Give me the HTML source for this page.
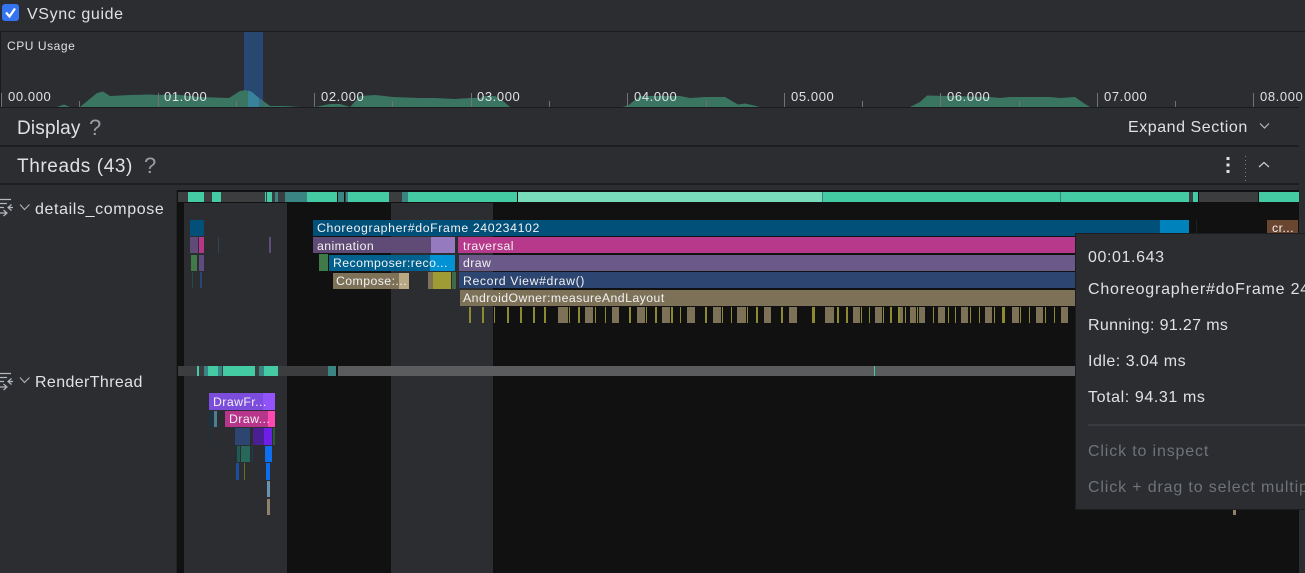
<!DOCTYPE html>
<html>
<head>
<meta charset="utf-8">
<style>
html,body{margin:0;padding:0;background:#2b2d30;}
body{width:1305px;height:573px;overflow:hidden;position:relative;font-family:"Liberation Sans",sans-serif;color:#dfe1e5;}
div{position:absolute;}
.t{white-space:nowrap;}
.b{position:absolute;white-space:nowrap;overflow:hidden;color:#f2f2f2;font-size:12.3px;letter-spacing:.42px;line-height:16px;box-sizing:border-box;padding-left:4px;height:16px;}
.tl{font-size:13px;letter-spacing:.6px;top:90px;line-height:14px;color:#dfe1e5;}
.tip{left:12px;font-size:16px;line-height:18px;white-space:nowrap;color:#dfe1e5;}
</style>
</head>
<body>
<!-- header -->
<div style="left:2px;top:4px;width:17px;height:17px;background:#3574f0;border-radius:3px;"></div>
<svg style="position:absolute;left:2px;top:4px" width="17" height="17"><path d="M4 8.500L7.500 12.500L13 4.500" stroke="#fff" stroke-width="2.200" fill="none"/></svg>
<div class="t" style="left:27px;top:6px;font-size:16px;line-height:18px;letter-spacing:.62px;">VSync guide</div>

<!-- chart -->
<div style="left:0;top:31px;width:1305px;height:1px;background:#1b1c1e;"></div>
<div style="left:0;top:31px;width:1px;height:76px;background:#1b1c1e;"></div>
<div class="t" style="left:7px;top:39px;font-size:12px;line-height:15px;letter-spacing:.55px;">CPU Usage</div>
<svg style="position:absolute;left:0;top:0" width="1305" height="110">
<rect x="244" y="32" width="19" height="75" fill="#2a4677"/>
<rect x="248" y="32" width="11" height="75" fill="#27496e"/>
<path fill="#3a7561" d="M57 107L64 104.500L70 107ZM80 107L97 93L103 91.500L110 96L130 95L150 94.500L158 95L175 94.500L200 97L229 98L240 91L246 90L262 100L270 106L285 106L300 107L315 107L330 104L340 104L347 106L350 107L360 96L375 95L393 97L420 98L435 98L455 99L470 98L480 98L485 96L495 96L503 101L510 107ZM622 107L628 105.500L640 96L680 96L690 98L705 97L725 97L738 104.500L745 103.500L752 105L760 107ZM910 107L920 102L927 95.500L950 96L990 97L1000 98L1010 97L1050 97L1060 98L1075 97L1085 104L1090 107Z"/>
<path fill="#38839b" d="M248 90.500L252 92L259 98L259 107L248 107Z"/>
<path fill="#37717f" d="M259 98L263 101L263 107L259 107Z"/>
<g fill="#6f7276">
<rect x="1" y="93" width="1" height="14"/><rect x="158" y="93" width="1" height="14"/><rect x="314" y="93" width="1" height="14"/><rect x="471" y="93" width="1" height="14"/><rect x="627" y="93" width="1" height="14"/><rect x="784" y="93" width="1" height="14"/><rect x="940" y="93" width="1" height="14"/><rect x="1097" y="93" width="1" height="14"/><rect x="1253" y="93" width="1" height="14"/>
<rect x="79" y="101" width="1" height="6"/><rect x="236" y="101" width="1" height="6"/><rect x="392" y="101" width="1" height="6"/><rect x="549" y="101" width="1" height="6"/><rect x="706" y="101" width="1" height="6"/><rect x="862" y="101" width="1" height="6"/><rect x="1019" y="101" width="1" height="6"/><rect x="1175" y="101" width="1" height="6"/>
</g>
</svg>
<div class="t tl" style="left:8px;">00.000</div>
<div class="t tl" style="left:164px;">01.000</div>
<div class="t tl" style="left:321px;">02.000</div>
<div class="t tl" style="left:477px;">03.000</div>
<div class="t tl" style="left:634px;">04.000</div>
<div class="t tl" style="left:791px;">05.000</div>
<div class="t tl" style="left:947px;">06.000</div>
<div class="t tl" style="left:1104px;">07.000</div>
<div class="t tl" style="left:1260px;">08.000</div>
<div style="left:0;top:107px;width:1299px;height:1px;background:#1b1c1e;"></div>

<!-- sections -->
<div class="t" style="left:17px;top:118px;font-size:19px;line-height:21px;letter-spacing:.17px;">Display</div>
<div class="t" style="left:89px;top:115px;font-size:22px;line-height:25px;color:#9a9da3;">?</div>
<div class="t" style="left:1128px;top:118px;font-size:16px;line-height:19px;letter-spacing:.55px;">Expand Section</div>
<svg style="position:absolute;left:1258px;top:120px" width="14" height="12"><path d="M2 3.500L6.500 8L11 3.500" stroke="#b4b8bf" stroke-width="1.200" fill="none"/></svg>
<div style="left:0;top:145px;width:1299px;height:2px;background:#1d1e20;"></div>
<div class="t" style="left:17px;top:156px;font-size:19px;line-height:21px;letter-spacing:.6px;">Threads (43)</div>
<div class="t" style="left:144px;top:153px;font-size:22px;line-height:25px;color:#9a9da3;">?</div>
<svg style="position:absolute;left:1220px;top:154px" width="60" height="28">
<rect x="6.500" y="3" width="3" height="3" fill="#dfe1e5"/><rect x="6.500" y="9.500" width="3" height="3" fill="#dfe1e5"/><rect x="6.500" y="16" width="3" height="3" fill="#dfe1e5"/>
<g fill="#777a7f"><rect x="25" y="2" width="1" height="1"/><rect x="25" y="6" width="1" height="1"/><rect x="25" y="10" width="1" height="1"/><rect x="25" y="14" width="1" height="1"/><rect x="25" y="18" width="1" height="1"/><rect x="25" y="22" width="1" height="1"/><rect x="25" y="26" width="1" height="1"/></g>
<path d="M39 13L44 8.500L49 13" stroke="#c4c7cc" stroke-width="1.300" fill="none"/>
</svg>
<div style="left:0;top:183px;width:1299px;height:2px;background:#1d1e20;"></div>

<!-- track labels -->
<svg style="position:absolute;left:0;top:198px" width="32" height="20" fill="none" stroke="#b4b8bf" stroke-width="1.200">
<path d="M0 1.500H11M0 5.500H7M0 9.500H4M11.500 6.500L8 9.500L11.500 12.500M8 9.500H13M0 15H6M3.500 12L7 15L3.500 18"/>
</svg>
<svg style="position:absolute;left:19px;top:203px" width="12" height="10"><path d="M1 1.500L5.500 6.500L10.500 1.500" stroke="#a8abb1" stroke-width="1.200" fill="none"/></svg>
<div class="t" style="left:35px;top:200px;font-size:16px;line-height:19px;letter-spacing:.62px;">details_compose</div>
<svg style="position:absolute;left:0;top:372px" width="32" height="20" fill="none" stroke="#b4b8bf" stroke-width="1.200">
<path d="M0 1.500H11M0 5.500H7M0 9.500H4M11.500 6.500L8 9.500L11.500 12.500M8 9.500H13M0 15H6M3.500 12L7 15L3.500 18"/>
</svg>
<svg style="position:absolute;left:19px;top:376px" width="12" height="10"><path d="M1 1.500L5.500 6.500L10.500 1.500" stroke="#a8abb1" stroke-width="1.200" fill="none"/></svg>
<div class="t" style="left:35px;top:373px;font-size:16px;line-height:19px;letter-spacing:.38px;">RenderThread</div>

<!-- timeline background -->
<div style="left:176px;top:190px;width:1px;height:383px;background:#232427;"></div>
<div style="left:177px;top:190px;width:1122px;height:383px;background:#111111;"></div>
<div style="left:184px;top:203px;width:103px;height:370px;background:#2b2d30;"></div>
<div style="left:391px;top:203px;width:102px;height:370px;background:#2b2d30;"></div>

<svg style="position:absolute;left:0;top:0" width="1305" height="573">
<!-- top thread strip -->
<rect x="178" y="192" width="1121" height="10" fill="#3c3d3f"/>
<g fill="#45cba4">
<rect x="188" y="192" width="16" height="10"/><rect x="212" y="192" width="9" height="10"/><rect x="265" y="192" width="1" height="10"/><rect x="267" y="192" width="5" height="10"/><rect x="276" y="192" width="1" height="10"/>
<rect x="307" y="192" width="30" height="10"/><rect x="348" y="192" width="41" height="10"/><rect x="408" y="192" width="109" height="10"/>
<rect x="823" y="192" width="237" height="10"/><rect x="1061" y="192" width="128" height="10"/><rect x="1193" y="192" width="5" height="10"/><rect x="1259" y="192" width="40" height="10"/>
</g>
<rect x="518" y="192" width="304" height="10" fill="#78dbbb"/>
<g fill="#3a8584"><rect x="275" y="192" width="3" height="10"/><rect x="285" y="192" width="22" height="10"/><rect x="338" y="192" width="6" height="10"/><rect x="346" y="192" width="2" height="10"/><rect x="402" y="192" width="6" height="10"/><rect x="822" y="192" width="1" height="10"/><rect x="1060" y="192" width="1" height="10"/></g>
<g fill="#111"><rect x="337" y="192" width="1" height="10"/><rect x="344" y="192" width="1" height="10"/><rect x="517" y="192" width="1" height="10"/><rect x="1198" y="192" width="1" height="10"/><rect x="1258" y="192" width="1" height="10"/></g>

<!-- render strip -->
<rect x="178" y="366" width="150" height="10" fill="#3c3d3f"/>
<rect x="338" y="366" width="737" height="10" fill="#5a5c5e"/>
<g fill="#45cba4"><rect x="197" y="366" width="2" height="10"/><rect x="208" y="366" width="10" height="10"/><rect x="223" y="366" width="32" height="10"/><rect x="264" y="366" width="14" height="10"/><rect x="874" y="366" width="1" height="10"/></g>
<g fill="#3a8584"><rect x="204" y="366" width="4" height="10"/><rect x="218" y="366" width="4" height="10"/><rect x="259" y="366" width="5" height="10"/><rect x="328" y="366" width="8" height="10"/></g>

<!-- small left frames -->
<rect x="190" y="220" width="14" height="16" fill="#00507a"/>
<rect x="190" y="237" width="8" height="16" fill="#5f4b75"/><rect x="199" y="237" width="5" height="16" fill="#b7368c"/>
<rect x="218" y="237" width="1" height="16" fill="#2f4656"/><rect x="269" y="237" width="2" height="16" fill="#5f4b80"/>
<rect x="191" y="255" width="6" height="16" fill="#3f7a48"/><rect x="199" y="255" width="5" height="16" fill="#5f4b80"/>
<rect x="192" y="272" width="1" height="16" fill="#264a44"/><rect x="200" y="272" width="2" height="16" fill="#284676"/>

<!-- render small frames -->
<rect x="209" y="411" width="4" height="16" fill="#1c3340"/><rect x="214" y="411" width="3" height="16" fill="#4f7d93"/>
<rect x="209" y="428" width="1" height="16" fill="#1f3340"/>
<rect x="235" y="428" width="15" height="17" fill="#2d4571"/><rect x="253" y="428" width="11" height="17" fill="#4a1f93"/><rect x="264" y="428" width="8" height="17" fill="#6d1fe8"/><rect x="273" y="428" width="2" height="17" fill="#2d5a3a"/>
<rect x="237" y="446" width="3" height="16" fill="#1f5a56"/><rect x="241" y="446" width="9" height="16" fill="#26685a"/><rect x="252" y="446" width="1" height="16" fill="#1f3a5a"/><rect x="265" y="446" width="7" height="16" fill="#0e6ef0"/>
<rect x="236" y="463" width="3" height="17" fill="#1a4fa0"/><rect x="244" y="463" width="1" height="17" fill="#6e6a20"/><rect x="266" y="463" width="4" height="17" fill="#0e6ef0"/>
<rect x="267" y="481" width="3" height="16" fill="#6b93b0"/>
<rect x="267" y="499" width="3" height="16" fill="#8f8268"/>

<!-- main bar highlights -->
<rect x="1160" y="220" width="29" height="16" fill="#0082bd"/>
<rect x="319" y="254" width="9" height="17" fill="#3f7a48"/>
<rect x="428" y="272" width="5" height="17" fill="#7d7158"/><rect x="433" y="272" width="18" height="17" fill="#9f9c35"/><rect x="452" y="272" width="4" height="17" fill="#3f6a48"/>
<rect x="1196" y="220" width="1" height="16" fill="#1a2328"/>

<!-- ticks: yellow -->
<g fill="#8d8a32">
<rect x="469" y="307" width="2" height="16"/><rect x="482" y="307" width="2" height="16"/><rect x="494" y="307" width="1" height="16"/><rect x="507" y="307" width="2" height="16"/><rect x="520" y="307" width="2" height="16"/><rect x="533" y="307" width="2" height="16"/><rect x="544" y="307" width="2" height="16"/><rect x="569" y="307" width="1" height="16"/><rect x="578" y="307" width="2" height="16"/><rect x="595" y="307" width="1" height="16"/><rect x="605" y="307" width="1" height="16"/><rect x="629" y="307" width="2" height="16"/><rect x="646" y="307" width="1" height="16"/><rect x="655" y="307" width="2" height="16"/><rect x="671" y="307" width="2" height="16"/><rect x="680" y="307" width="1" height="16"/><rect x="705" y="307" width="2" height="16"/><rect x="722" y="307" width="1" height="16"/><rect x="731" y="307" width="1" height="16"/><rect x="747" y="307" width="1" height="16"/><rect x="756" y="307" width="2" height="16"/><rect x="781" y="307" width="2" height="16"/><rect x="812" y="307" width="3" height="16"/><rect x="837" y="307" width="2" height="16"/><rect x="846" y="307" width="2" height="16"/><rect x="861" y="307" width="1" height="16"/><rect x="869" y="307" width="1" height="16"/><rect x="883" y="307" width="1" height="16"/><rect x="890" y="307" width="2" height="16"/><rect x="898" y="307" width="2" height="16"/><rect x="905" y="307" width="1" height="16"/><rect x="917" y="307" width="1" height="16"/><rect x="933" y="307" width="1" height="16"/><rect x="948" y="307" width="1" height="16"/><rect x="955" y="307" width="1" height="16"/><rect x="970" y="307" width="1" height="16"/><rect x="979" y="307" width="1" height="16"/><rect x="994" y="307" width="1" height="16"/><rect x="1002" y="307" width="3" height="16"/><rect x="1020" y="307" width="1" height="16"/><rect x="1029" y="307" width="1" height="16"/><rect x="1045" y="307" width="1" height="16"/><rect x="1054" y="307" width="1" height="16"/>
</g>
<!-- ticks: tan -->
<g fill="#7d7158">
<rect x="558" y="307" width="10" height="16"/><rect x="585" y="307" width="8" height="16"/><rect x="612" y="307" width="7" height="16"/><rect x="637" y="307" width="8" height="16"/><rect x="662" y="307" width="8" height="16"/><rect x="687" y="307" width="8" height="16"/><rect x="713" y="307" width="8" height="16"/><rect x="737" y="307" width="9" height="16"/><rect x="764" y="307" width="7" height="16"/><rect x="789" y="307" width="8" height="16"/><rect x="825" y="307" width="9" height="16"/><rect x="853" y="307" width="7" height="16"/><rect x="875" y="307" width="7" height="16"/><rect x="900" y="307" width="3" height="16"/><rect x="910" y="307" width="6" height="16"/><rect x="919" y="307" width="6" height="16"/><rect x="938" y="307" width="7" height="16"/><rect x="961" y="307" width="7" height="16"/><rect x="985" y="307" width="7" height="16"/><rect x="1012" y="307" width="7" height="16"/><rect x="1036" y="307" width="7" height="16"/><rect x="1061" y="307" width="7" height="16"/>
</g>
<rect x="1233" y="509" width="3" height="6" fill="#8f8268"/>
</svg>

<!-- labelled bars -->
<div class="b" style="left:313px;top:220px;width:847px;background:#00507a;letter-spacing:.62px;">Choreographer#doFrame 240234102</div>
<div class="b" style="left:313px;top:237px;width:118px;background:#5f4b75;line-height:18px;">animation</div>
<div style="left:431px;top:237px;width:24px;height:16px;background:#957ac0;"></div>
<div class="b" style="left:458px;top:237px;width:640px;background:#b7398b;padding-left:5px;line-height:18px;">traversal</div>
<div class="b" style="left:329px;top:255px;width:126px;background:linear-gradient(90deg,#00618f 0,#00618f 101px,#0092d2 101px);">Recomposer:reco...</div>
<div class="b" style="left:459px;top:255px;width:640px;background:#6b5a89;">draw</div>
<div class="b" style="left:333px;top:273px;width:76px;padding-left:3px;background:linear-gradient(90deg,#7d7158 0,#7d7158 66px,#b8a984 66px);">Compose:...</div>
<div class="b" style="left:459px;top:272px;width:640px;background:#2d4571;letter-spacing:.6px;line-height:18px;">Record View#draw()</div>
<div class="b" style="left:460px;top:290px;width:640px;background:#7d7158;padding-left:3px;letter-spacing:.45px;">AndroidOwner:measureAndLayout</div>
<div class="b" style="left:209px;top:393px;width:66px;height:17px;line-height:18px;background:linear-gradient(90deg,#7c4ddc 0,#7c4ddc 54px,#9353fb 54px);">DrawFr...</div>
<div class="b" style="left:225px;top:411px;width:50px;background:linear-gradient(90deg,#b7368c 0,#b7368c 43px,#ff49b0 43px);">Draw...</div>
<div class="b" style="left:1267px;top:220px;width:31px;background:#6a4630;padding-left:5px;">cr...</div>

<!-- tooltip -->
<div style="left:1075px;top:233px;width:232px;height:277px;background:#2b2d30;border:1px solid #1c1d20;box-sizing:border-box;overflow:hidden;">
<div class="tip" style="top:15px;letter-spacing:.6px;">00:01.643</div>
<div class="tip" style="top:47px;letter-spacing:.8px;">Choreographer#doFrame 240234102</div>
<div class="tip" style="top:83px;letter-spacing:.35px;">Running: 91.27 ms</div>
<div class="tip" style="top:119px;letter-spacing:.5px;">Idle: 3.04 ms</div>
<div class="tip" style="top:155px;letter-spacing:.6px;">Total: 94.31 ms</div>
<div style="left:12px;top:190px;width:220px;height:2px;background:#393b40;"></div>
<div class="tip" style="top:209px;color:#6f737a;letter-spacing:.85px;">Click to inspect</div>
<div class="tip" style="top:245px;color:#6f737a;letter-spacing:.85px;">Click + drag to select multiple</div>
</div>
</body>
</html>
